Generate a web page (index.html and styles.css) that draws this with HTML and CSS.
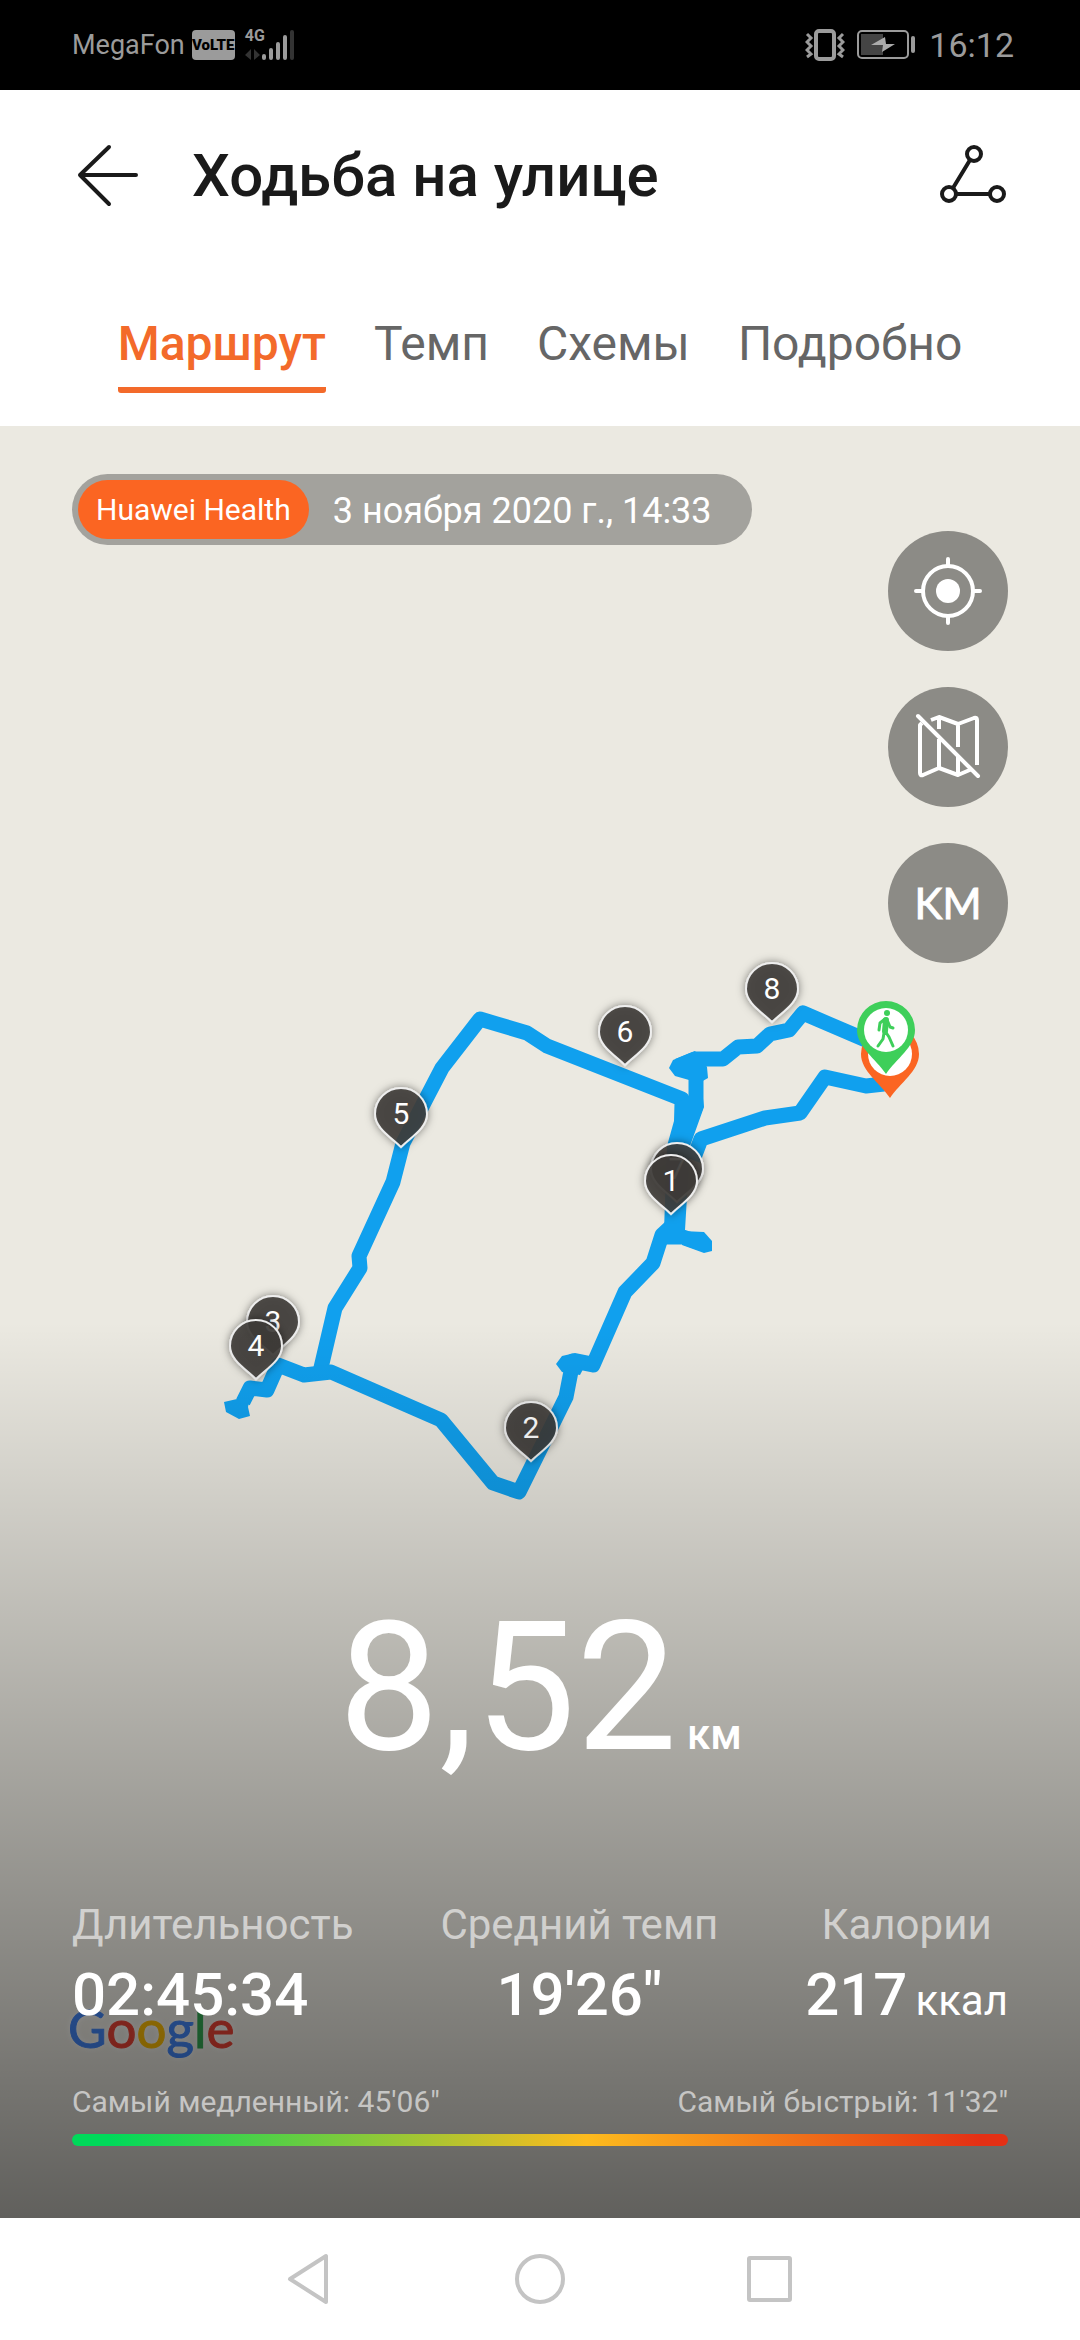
FILE: index.html
```html
<!DOCTYPE html>
<html lang="ru">
<head>
<meta charset="utf-8">
<meta name="viewport" content="width=device-width, initial-scale=1">
<title>Ходьба на улице</title>
<link rel="stylesheet" href="styles.css">
</head>
<body>
<div class="status">
  <div class="status-side">
    <span class="carrier">MegaFon</span>
    <span class="volte">VoLTE</span>
    <span class="network">
      <span class="generation">4G</span>
      <svg class="signal" width="50" height="32" viewBox="0 0 50 32" aria-hidden="true">
        <path d="M0 26 6 20V31zM9 20 15 26 9 31z" fill="#333"/>
        <g stroke="#9b9b9b" stroke-width="4" stroke-linecap="round">
          <path d="M19 27v2M26 21v8M33 15v14M40 8v21"/><path d="M47 3v26" stroke="#333"/>
        </g>
      </svg>
    </span>
  </div>
  <div class="status-side status-right">
    <svg width="40" height="34" viewBox="0 0 40 34" fill="none" stroke="#9b9b9b" aria-hidden="true">
      <rect x="11" y="3" width="18" height="28" rx="3" stroke-width="4"/>
      <path d="M2 6l4 4-4 4 4 4-4 4 4 4-4 3M38 6l-4 4 4 4-4 4 4 4-4 4 4 3" stroke-width="3"/>
    </svg>
    <svg class="battery" width="60" height="30" viewBox="0 0 60 30" aria-hidden="true">
      <rect x="1" y="1" width="50" height="27" rx="4" fill="none" stroke="#9b9b9b" stroke-width="2"/>
      <rect x="4" y="4" width="22" height="21" fill="#444"/>
      <path d="M14 15 28 7l1 7h9L25 22l1-7z" fill="#ababab"/>
      <rect x="54" y="6" width="4" height="17" rx="2" fill="#9b9b9b"/>
    </svg>
    <span class="clock">16:12</span>
  </div>
</div>

<header class="header">
  <button class="icon-button" aria-label="Назад">
    <svg width="64" height="64" viewBox="0 0 64 64" fill="none" stroke="#1a1a1a" stroke-width="4" stroke-linecap="round" stroke-linejoin="round"><path d="M33 3 4 31 33 60M4 31H60"/></svg>
  </button>
  <h1 class="title">Ходьба на улице</h1>
  <button class="icon-button" aria-label="Поделиться">
    <svg width="68" height="64" viewBox="0 0 68 64" fill="none" stroke="#1a1a1a" stroke-width="4"><circle cx="34" cy="10" r="7"/><circle cx="9" cy="50" r="7"/><circle cx="57" cy="50" r="7"/><path d="M30 16 13 44M16 50H50"/></svg>
  </button>
</header>

<nav class="tabs" aria-label="Разделы">
  <a class="tab tab-active" href="#route" aria-current="page">Маршрут</a>
  <a class="tab" href="#pace">Темп</a>
  <a class="tab" href="#charts">Схемы</a>
  <a class="tab" href="#details">Подробно</a>
</nav>

<main class="map" id="route">
  <svg class="canvas" viewBox="0 426 1080 1792" preserveAspectRatio="xMidYMin slice" role="img" aria-label="Маршрут прогулки">
    <defs>
      <filter id="shadow" x="-40%" y="-40%" width="180%" height="180%"><feDropShadow dx="0" dy="0" stdDeviation="4" flood-color="#000" flood-opacity=".5"/></filter>
      <path id="drop" d="M0-1C-10-11-26-20-26-34a26 26 0 0 1 52 0C26-20 10-11 0-1z"/>
      <path id="pin" d="M0 0C-10-15-29-27-29-44a29 29 0 0 1 58 0C29-27 10-15 0 0z"/>
    </defs>
    <g fill="none" stroke="#10a0ee" stroke-width="15" stroke-linejoin="round">
      <path d="M880 1046 803 1013 789 1030 770 1034 757 1046 738 1047 723 1059 695 1059 678 1066"/>
      <path d="M884 1084 866 1086 825 1077 800 1113 765 1118 701 1139 693 1160"/>
      <path d="M696 1070 696 1106 680 1146 675 1225"/>
      <path d="M682 1130V1099L547 1046 527 1033 480 1019 442 1068 403 1143 393 1182 359 1256 360 1268 335 1308 320 1372"/>
      <path d="M676 1222 662 1235 653 1263 625 1292 593 1365 573 1361 566 1397 519 1492 493 1483 441 1420 331 1372 304 1375 278 1365 267 1390 250 1388 243 1402"/>
      <path d="M665 1237 683 1237 703 1244"/>
    </g>
    <g fill="#10a0ee">
      <path d="M669 1068 673 1060 695 1051 707 1067 708 1078 701 1082 704 1107 690 1146 685 1230 664 1230 667 1146 674 1121 675 1103 689 1097V1080L675 1076z"/>
      <path d="M704 1232 712 1241V1251L704 1253 682 1245V1231z"/>
      <path d="M556 1364 562 1356 575 1353 590 1356 580 1375 562 1372z"/>
      <path d="M224 1402 237 1399 250 1398 248 1407 250 1416 239 1419 226 1412z"/>
    </g>
    <g class="pins" text-anchor="middle">
      <g transform="translate(772 1023)"><use href="#drop" filter="url(#shadow)"/><text y="-24">8</text></g>
      <g transform="translate(625 1066)"><use href="#drop" filter="url(#shadow)"/><text y="-24">6</text></g>
      <g transform="translate(401 1148)"><use href="#drop" filter="url(#shadow)"/><text y="-24">5</text></g>
      <g transform="translate(677 1203)"><use href="#drop" filter="url(#shadow)"/><text y="-24">7</text></g>
      <g transform="translate(671 1215)"><use href="#drop" filter="url(#shadow)"/><text y="-24">1</text></g>
      <g transform="translate(273 1356)"><use href="#drop" filter="url(#shadow)"/><text y="-24">3</text></g>
      <g transform="translate(256 1380)"><use href="#drop" filter="url(#shadow)"/><text y="-24">4</text></g>
      <g transform="translate(531 1462)"><use href="#drop" filter="url(#shadow)"/><text y="-24">2</text></g>
    </g>
    <g transform="translate(890 1098)"><use href="#pin" fill="#fb6522"/><circle cy="-44" r="22" fill="#fff"/></g>
    <g transform="translate(886 1074)">
      <use href="#pin" fill="#3ecf5a"/><circle cy="-44" r="22" fill="#fff"/>
      <g fill="none" stroke="#3ecf5a" stroke-width="3" stroke-linecap="round" stroke-linejoin="round">
        <circle cx="1" cy="-61" r="3" fill="#3ecf5a" stroke="none"/>
        <path d="M0-54-1-43" stroke-width="6"/>
        <path d="M-1-43 3-37 7-28M-2-41-3-35-8-28M-1-55-6-51-7-44M2-52 4-47 7-46"/>
      </g>
    </g>
  </svg>
  <div class="google" aria-label="Google"><span class="g-blue">G</span><span class="g-red">o</span><span class="g-yellow">o</span><span class="g-blue">g</span><span class="g-green">l</span><span class="g-red">e</span></div>
  <div class="shade"></div>

  <div class="overlay">
    <div class="source">
      <span class="app">Huawei Health</span>
      <time class="date" datetime="2020-11-03T14:33">3 ноября 2020 г., 14:33</time>
    </div>
    <div class="controls">
      <button class="round" aria-label="Моё местоположение">
        <svg width="72" height="72" viewBox="0 0 72 72" fill="none" stroke="#fff" stroke-width="4" stroke-linecap="round"><circle cx="36" cy="36" r="25"/><circle cx="36" cy="36" r="12" fill="#fff" stroke="none"/><path d="M36 4v6M36 62v6M4 36h6M62 36h6"/></svg>
      </button>
      <button class="round" aria-label="Скрыть карту">
        <svg width="72" height="72" viewBox="0 0 72 72" fill="none" stroke="#fff" stroke-width="4" stroke-linecap="round" stroke-linejoin="round"><path d="M10 12 8 14V62q0 3 3 2l16-7 19 7 14-6M19 9l8-3 19 7 16-6q3-1 3 2V54M27 6V18M27 28V57M46 13V36M46 46V64" stroke-linecap="butt"/><path d="M6 5 66 65"/></svg>
      </button>
      <button class="round">KM</button>
    </div>
    <div class="distance"><span class="distance-value">8,52</span><span class="distance-unit">км</span></div>
    <dl class="stats">
      <div class="stat"><dt>Длительность</dt><dd class="start">02:45:34</dd></div>
      <div class="stat"><dt>Средний темп</dt><dd>19'26"</dd></div>
      <div class="stat"><dt>Калории</dt><dd>217<span class="unit">ккал</span></dd></div>
    </dl>
    <div class="paces"><span>Самый медленный: 45'06"</span><span>Самый быстрый: 11'32"</span></div>
    <div class="scale"></div>
  </div>
</main>

<nav class="system" aria-label="Система">
  <button class="system-button" aria-label="Назад"><svg width="52" height="54" viewBox="0 0 52 54"><path d="M6 27 42 4V50z"/></svg></button>
  <button class="system-button" aria-label="Домой"><svg width="52" height="54" viewBox="0 0 52 54"><circle cx="26" cy="27" r="23"/></svg></button>
  <button class="system-button" aria-label="Недавние"><svg width="52" height="54" viewBox="0 0 52 54"><rect x="5" y="6" width="41" height="42" rx="1"/></svg></button>
</nav>
</body>
</html>
```
FILE: styles.css
```css
* {
  box-sizing: border-box;
}

body {
  display: flex;
  flex-direction: column;
  min-height: 100vh;
  margin: 0;
  background: #fff;
  color: #1a1a1a;
  font-family: Roboto, "Noto Sans", sans-serif;
}

button {
  margin: 0;
  padding: 0;
  border: 0;
  background: none;
  color: inherit;
  font: inherit;
}

svg {
  display: block;
}

/* Status bar */
.status {
  display: flex;
  justify-content: space-between;
  align-items: center;
  height: 90px;
  padding: 0 66px 0 72px;
  background: #000;
  color: #9b9b9b;
}

.status-side {
  display: flex;
  align-items: center;
  gap: 7px;
}

.status-right {
  gap: 12px;
}

.carrier {
  font-size: 27px;
}

.volte {
  width: 43px;
  border-radius: 4px;
  background: #9b9b9b;
  color: #000;
  font-size: 15px;
  font-weight: 900;
  line-height: 30px;
  text-align: center;
}

.network {
  position: relative;
  margin-left: 3px;
}

.generation {
  position: absolute;
  top: 0;
  left: 0;
  font-size: 16px;
  font-weight: 700;
  line-height: 14px;
}

.clock {
  font-size: 34px;
}

/* Header */
.header {
  display: flex;
  align-items: center;
  height: 172px;
  padding: 0 72px 0 76px;
}

.title {
  flex: 1;
  margin: 0 0 0 52px;
  font-size: 60px;
  font-weight: 500;
  line-height: 72px;
}

/* Tabs */
.tabs {
  display: flex;
  justify-content: center;
  gap: 48px;
  height: 164px;
  padding-top: 50px;
}

.tab {
  height: 81px;
  color: #666;
  font-size: 48px;
  line-height: 64px;
  text-decoration: none;
}

.tab-active {
  border-bottom: 6px solid #f36a2a;
  border-radius: 3px;
  color: #f36a2a;
  font-weight: 500;
}

/* Map */
.map {
  position: relative;
  display: flex;
  flex: 1;
  background: #ebe9e1;
}

.canvas {
  position: absolute;
  inset: 0;
  width: 100%;
  height: 100%;
}

.pins use {
  fill: #3f3c3a;
  fill-opacity: 0.88;
  stroke: #eee;
  stroke-width: 2px;
}

.pins text {
  fill: #fff;
  font-size: 30px;
}

.google {
  position: absolute;
  bottom: 158px;
  left: 68px;
  font-family: Lato, sans-serif;
  font-size: 53px;
  line-height: 64px;
  -webkit-text-stroke: 1px;
  text-shadow: 0 0 6px #fff;
}

.g-blue { color: #4285f4; }
.g-red { color: #ea4335; }
.g-yellow { color: #fbbc05; }
.g-green { color: #34a853; }

.shade {
  position: absolute;
  inset: 50% 0 0;
  background: linear-gradient(rgba(0, 0, 0, 0), rgba(0, 0, 0, 0.59));
}

.overlay {
  position: relative;
  display: flex;
  flex: 1;
  flex-direction: column;
  padding: 48px 72px 72px;
  color: #fff;
}

.source {
  display: flex;
  align-items: center;
  align-self: flex-start;
  gap: 24px;
  padding: 6px 40px 6px 6px;
  border-radius: 36px;
  background: #a3a29d;
}

.app {
  padding: 0 18px;
  border-radius: 30px;
  background: #fb6522;
  font-size: 30px;
  line-height: 59px;
}

.date {
  padding-top: 3px;
  font-size: 36px;
  line-height: 56px;
}

.controls {
  display: flex;
  flex-direction: column;
  align-self: flex-end;
  gap: 36px;
  margin-top: -14px;
}

.round {
  display: grid;
  place-items: center;
  width: 120px;
  height: 120px;
  border-radius: 50%;
  background: #8c8b86;
  font-family: Lato, sans-serif;
  font-size: 42px;
  -webkit-text-stroke: 1px;
}

.distance {
  margin-top: auto;
  padding-bottom: 46px;
  text-align: center;
  line-height: 210px;
}

.distance-value {
  font-size: 180px;
}

.distance-unit {
  margin-left: 10px;
  font-size: 42px;
  font-weight: 500;
}

.stats {
  display: flex;
  justify-content: space-between;
  margin: 0;
  text-align: center;
}

.stat dt {
  color: rgba(255, 255, 255, 0.6);
  font-size: 42px;
  line-height: 60px;
}

.stat dd {
  margin: 0;
  font-size: 60px;
  font-weight: 500;
  line-height: 80px;
}

.stat .start {
  text-align: left;
}

.unit {
  margin-left: 8px;
  font-size: 42px;
  font-weight: 400;
}

.paces {
  display: flex;
  justify-content: space-between;
  padding: 41px 0 12px;
  color: rgba(255, 255, 255, 0.6);
  font-size: 30px;
  line-height: 40px;
}

.scale {
  height: 12px;
  border-radius: 6px;
  background: linear-gradient(90deg, #00d95a 4%, #fdbb1e 55%, #e43015 97%);
}

/* System navigation */
.system {
  display: flex;
  justify-content: center;
  gap: 178px;
  height: 122px;
}

.system-button {
  width: 52px;
}

.system-button svg {
  fill: none;
  stroke: #c4c4c4;
  stroke-width: 4px;
  stroke-linejoin: round;
}
```
